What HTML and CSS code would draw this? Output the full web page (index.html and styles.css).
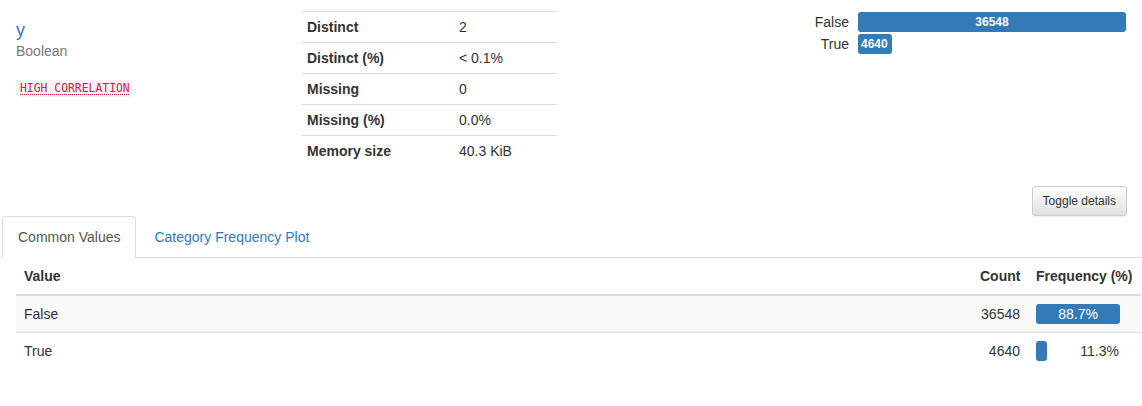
FILE: index.html
```
<!DOCTYPE html>
<html>
<head>
<meta charset="utf-8">
<link rel="stylesheet" href="styles.css">
</head>
<body>
<div class="overview">
  <div class="col-name">
    <a class="var-title" href="#">y</a>
    <div class="var-type">Boolean</div>
    <div class="alerts"><code class="alert-badge"><abbr>HIGH CORRELATION</abbr></code></div>
  </div>
  <div class="col-stats">
    <table class="stats">
      <tr><th>Distinct</th><td>2</td></tr>
      <tr><th>Distinct (%)</th><td>&lt; 0.1%</td></tr>
      <tr><th>Missing</th><td>0</td></tr>
      <tr><th>Missing (%)</th><td>0.0%</td></tr>
      <tr><th>Memory size</th><td>40.3 KiB</td></tr>
    </table>
  </div>
  <div class="col-chart">
    <div class="mini">
      <div class="mini-label">False</div>
      <div class="mini-track"><div class="mini-bar center" style="width:100%">36548</div></div>
      <div class="mini-label">True</div>
      <div class="mini-track"><div class="mini-bar" style="width:12.7%">4640</div></div>
    </div>
  </div>
</div>
<div class="toolbar">
  <button class="btn">Toggle details</button>
</div>
<div class="tabs">
  <ul class="nav">
    <li class="active"><a href="#">Common Values</a></li>
    <li><a href="#">Category Frequency Plot</a></li>
  </ul>
</div>
<div class="freq-wrap">
  <table class="freq">
    <colgroup><col><col class="c-count"><col class="c-freq"></colgroup>
    <thead>
      <tr><th class="left">Value</th><th class="num">Count</th><th class="left">Frequency (%)</th></tr>
    </thead>
    <tbody>
      <tr class="striped"><td>False</td><td class="num">36548</td><td><div class="fbox"><div class="fbar" style="width:88.7%">88.7%</div></div></td></tr>
      <tr><td>True</td><td class="num">4640</td><td><div class="fbox"><div class="fbar" style="width:11.3%">&nbsp;</div><span class="flabel">11.3%</span></div></td></tr>
    </tbody>
  </table>
</div>
</body>
</html>
```
FILE: styles.css
```
* { box-sizing: border-box; }
html, body { margin: 0; padding: 0; background: #fff; }
body {
  font-family: "Liberation Sans", Arial, Helvetica, sans-serif;
  font-size: 14px;
  line-height: 20px;
  color: #333;
  width: 1142px;
}
.overview {
  display: flex;
  padding: 0 15px 0 16px;
}
.col-name {
  width: 286px;
  flex: none;
  padding-top: 19px;
}
.var-title {
  display: block;
  font-size: 18px;
  line-height: 22px;
  color: #337ab7;
  text-decoration: none;
}
.var-type {
  color: #777;
}
.alerts {
  margin-top: 16px;
}
.alert-badge {
  display: inline-block;
  font-family: "DejaVu Sans Mono", "Liberation Mono", monospace;
  font-size: 11.4px;
  line-height: 13px;
  padding: 2px 3px 2px 4px;
  color: #c7254e;
  background: #f9f2f4;
  border-radius: 4px;
}
.alert-badge abbr {
  text-decoration: underline dotted;
  text-underline-offset: 2px;
}
.col-stats {
  width: 255px;
  flex: none;
}
.stats {
  margin-top: 11px;
  width: 255px;
  border-collapse: collapse;
}
.stats th, .stats td {
  padding: 5px;
  border-top: 1px solid #ddd;
  text-align: left;
  vertical-align: top;
  line-height: 20px;
}
.stats th {
  width: 152px;
  font-weight: bold;
}
.col-chart {
  flex: 1;
  display: flex;
  justify-content: flex-end;
  padding-right: 1px;
}
.mini {
  margin-top: 12px;
  display: grid;
  grid-template-columns: auto 268px;
  column-gap: 9px;
  row-gap: 2px;
  align-self: flex-start;
}
.mini-label {
  text-align: right;
  line-height: 20px;
}
.mini-track {
  height: 20px;
}
.mini-bar {
  height: 20px;
  background: #337ab7;
  color: #fff;
  font-size: 12px;
  font-weight: bold;
  line-height: 20px;
  border-radius: 3px;
  padding-left: 3px;
  white-space: nowrap;
}
.mini-bar.center {
  text-align: center;
  padding-left: 0;
}
.toolbar {
  display: flex;
  justify-content: flex-end;
  padding-right: 15px;
  margin-top: 20px;
}
.btn {
  font-family: "Liberation Sans", Arial, sans-serif;
  font-size: 12px;
  line-height: 18px;
  padding: 5px 10px;
  color: #333;
  border: 1px solid #ccc;
  border-radius: 3px;
  background: linear-gradient(to bottom, #fff 0, #e0e0e0 100%);
  box-shadow: inset 0 1px 0 rgba(255,255,255,.15), 0 1px 1px rgba(0,0,0,.075);
  cursor: pointer;
}
.tabs {
  padding-left: 2px;
}
.nav {
  display: flex;
  list-style: none;
  margin: 0;
  padding: 0;
  border-bottom: 1px solid #ddd;
}
.nav li {
  margin-bottom: -1px;
}
.nav a {
  display: block;
  padding: 10px 15px;
  line-height: 20px;
  margin-right: 2px;
  border: 1px solid transparent;
  border-radius: 4px 4px 0 0;
  color: #337ab7;
  text-decoration: none;
}
.nav li.active a {
  color: #555;
  background: #fff;
  border-color: #ddd #ddd transparent;
}
.freq-wrap {
  padding-left: 16px;
}
.freq {
  width: 1125px;
  border-collapse: collapse;
  table-layout: fixed;
}
.c-count { width: 56px; }
.c-freq { width: 113px; }
.freq th, .freq td {
  padding: 8px;
  line-height: 20px;
  vertical-align: top;
  white-space: nowrap;
}
.freq th {
  font-weight: bold;
  border-bottom: 2px solid #ddd;
}
.freq td {
  border-top: 1px solid #ddd;
}
.freq tbody tr:first-child td {
  border-top: 0;
}
.freq .left { text-align: left; }
.freq .num { text-align: right; }
.freq tr.striped td { background: #f9f9f9; }
.fbox {
  width: 95px;
  display: flex;
  align-items: center;
}
.fbar {
  height: 20px;
  background: #337ab7;
  color: #fff;
  border-radius: 3px;
  text-align: center;
  line-height: 20px;
  overflow: hidden;
  flex: none;
}
.flabel {
  margin-left: auto;
  padding-right: 12px;
}
```
